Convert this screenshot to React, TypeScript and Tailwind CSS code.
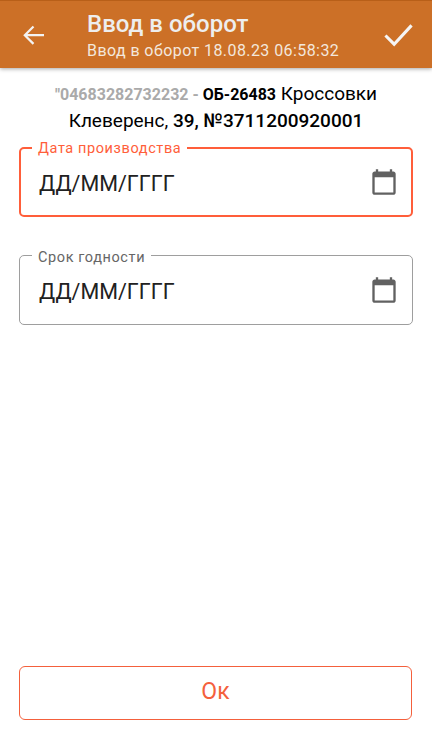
// App.tsx
// Date entry screen for a marked item

function CalendarIcon() {
  return (
    <svg width="28" height="28" viewBox="0 0 24 24" fill="#616161">
      <path d="M20 3h-1V1h-2v2H7V1H5v2H4c-1.100 0-2 .9-2 2v16c0 1.100.9 2 2 2h16c1.100 0 2-.9 2-2V5c0-1.100-.9-2-2-2zm0 18H4V8h16v13z" />
    </svg>
  );
}

function DateField({ label, focused }: { label: string; focused?: boolean }) {
  return (
    <div
      className={
        focused
          ? 'relative h-[70px] rounded-[5px] border-2 border-[#ff5e3a] flex items-center justify-between pl-[18px] pr-[13px]'
          : 'relative h-[70px] rounded-[5px] border border-[#9e9e9e] flex items-center justify-between pl-[19px] pr-[14px]'
      }
    >
      <span
        className={
          focused
            ? 'absolute left-[11px] top-[-7px] bg-white px-[6px] text-[14.500px] leading-[14px] tracking-[0.6px] text-[#ff5e3a]'
            : 'absolute left-[12px] top-[-5px] bg-white px-[6px] text-[14.500px] leading-[14px] tracking-[0.6px] text-[#666666]'
        }
      >
        {label}
      </span>
      <span className="mt-[4px] text-[21.500px] leading-[28px] text-[#212121]">ДД/ММ/ГГГГ</span>
      <CalendarIcon />
    </div>
  );
}

export default function App() {
  return (
    <div className="h-[740px] w-[432px] bg-white flex flex-col font-['Roboto',sans-serif]">
      {/* Header */}
      <header className="h-[68px] shrink-0 bg-[#cc7027] border-t border-[#b85f18] shadow-[0_1px_4px_rgba(0,0,0,0.35)] flex items-center justify-between pl-[22px] pr-[19px]">
        <div className="flex items-center">
          <svg width="24" height="24" viewBox="0 0 24 24" fill="none" stroke="#f3f3f3" strokeWidth="2.200">
            <path d="M22 12.200H3M11.500 3.500L2.800 12.200l8.700 8.700" />
          </svg>
          <div className="ml-[41px] mt-[2px] flex flex-col">
            <span className="text-[24px] leading-[30px] font-medium text-[#eeeeee]">Ввод в оборот</span>
            <span className="mt-[1px] text-[16px] leading-[22px] tracking-[0.42px] text-[#f3e7dc]">Ввод в оборот 18.08.23 06:58:32</span>
          </div>
        </div>
        <svg width="29" height="24" viewBox="0 0 30 24" fill="none" stroke="#f5f5f5" strokeWidth="3.200">
          <path d="M1.500 12.500l9 9L28.500 2" />
        </svg>
      </header>

      {/* Item description */}
      <p className="mt-[13px] px-[30px] text-center text-[19px] leading-[26px] text-black">
        <span className="font-bold text-[16px] text-[#aaaaaa]">"04683282732232 - </span>
        <span className="font-bold text-[16px]">ОБ-26483</span> Кроссовки Клеверенс, <span className="font-medium">39, №3711200920001</span>
      </p>

      {/* Date fields */}
      <div className="mt-[13px] px-[19px] flex flex-col gap-[38px]">
        <DateField label="Дата производства" focused />
        <DateField label="Срок годности" />
      </div>

      <div className="mt-auto mb-[20px] px-[19px]">
        <button className="w-[393px] h-[54px] pb-[1px] rounded-[6px] border border-[#f4603c] text-[23px] text-[#f4603c]">Ок</button>
      </div>
    </div>
  );
}
